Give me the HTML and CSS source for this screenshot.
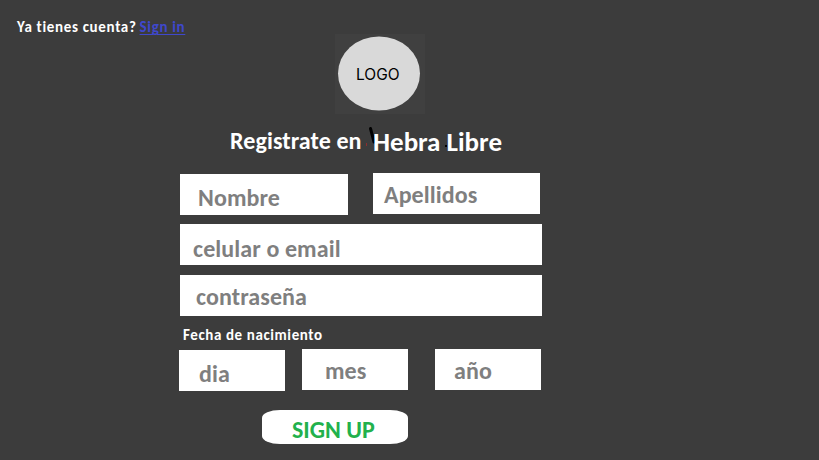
FILE: index.html
```html
<!DOCTYPE html>
<html lang="es">
<head>
<meta charset="utf-8">
<title>Hebra Libre</title>
<link rel="stylesheet" href="styles.css">
</head>
<body>
<header class="top"><span class="ask">Ya tienes cuenta?</span><a class="signin" href="#">Sign in</a></header>
<main class="page">
  <div class="logo">
    <svg width="90" height="80" viewBox="0 0 90 80"><ellipse cx="44" cy="39.5" rx="41" ry="37" fill="#d9d9d9"/></svg>
    <span class="logo-text">LOGO</span>
  </div>
  <h1 class="title">
    <span class="lead">Registrate en</span>
    <span class="brand">Hebra Libre</span>
    <svg class="strokes" width="90" height="30" viewBox="0 0 90 30"><path d="M5.5 3.5 L9 17" stroke="#000" stroke-width="3" stroke-linecap="round"/><rect x="80" y="20" width="2" height="2"/><rect x="1" y="18" width="1" height="3" fill="#8c2f2f"/></svg>
  </h1>
  <form class="form">
    <div class="row names">
      <div class="field nombre"><span>Nombre</span></div>
      <div class="field apellidos"><span>Apellidos</span></div>
    </div>
    <div class="field contact"><span>celular o email</span></div>
    <div class="field pass"><span>contraseña</span></div>
    <div class="caption"><span>Fecha de nacimiento</span></div>
    <div class="row dates">
      <div class="field dia"><span>dia</span></div>
      <div class="field mes"><span>mes</span></div>
      <div class="field anio"><span>año</span></div>
    </div>
    <button class="signup" type="button"><span>SIGN UP</span></button>
  </form>
</main>
</body>
</html>
```
FILE: styles.css
```css
* { box-sizing: border-box; }
body {
  margin: 0;
  height: 460px;
  overflow: hidden;
  background: #3c3c3c;
  font-family: Carlito, Lato, sans-serif;
  font-weight: 700;
  font-variant-ligatures: none;
  color: #fff;
  white-space: nowrap;
}
.top {
  display: flex;
  gap: 3px;
  height: 34px;
  padding: 17px 0 0 17px;
  font-size: 15px;
  line-height: 20px;
  letter-spacing: 0.67px;
}
.signin { color: #3f48cc; text-decoration: underline; text-underline-offset: 2px; text-decoration-thickness: 1px; }
.logo {
  display: grid;
  width: 90px;
  height: 80px;
  margin-left: 335px;
  background: #404040;
}
.logo svg, .logo-text { grid-area: 1 / 1; }
.logo-text {
  padding: 31px 0 0 21px;
  font: 400 15.5px/20px Inter, sans-serif;
  color: #000;
}
.title {
  position: relative;
  display: flex;
  height: 59px;
  margin: 0;
  padding: 13px 0 0 230px;
  font-weight: 700;
}
.lead { width: 143px; font-size: 24px; line-height: 28px; letter-spacing: 0.1px; }
.brand { padding-top: 1px; font-size: 27px; line-height: 28px; }
.strokes { position: absolute; left: 365px; top: 11px; z-index: -1; }
.form { width: 363px; margin-left: 179px; }
.row { display: flex; align-items: flex-start; }
.field {
  height: 41px;
  background: #fff;
  color: #7f7f7f;
  font-size: 24px;
  line-height: 34px;
  letter-spacing: 0.1px;
}
.names { height: 51px; padding-left: 1px; gap: 25px; }
.nombre { width: 168px; margin-top: 1px; padding: 7px 0 0 18px; }
.apellidos { width: 167px; padding: 5px 0 0 11px; }
.contact { margin: 0 0 10px 1px; padding: 8px 0 0 13px; }
.pass { margin-left: 1px; padding: 5px 0 0 16px; }
.caption { height: 33px; padding: 9px 0 0 4px; font-size: 15px; line-height: 20px; letter-spacing: 0.6px; }
.dia { width: 106px; margin-top: 1px; padding: 7px 0 0 20px; }
.mes { width: 106px; margin-left: 17px; padding: 5px 0 0 23px; }
.anio { width: 106px; margin-left: 27px; padding: 5px 0 0 19px; }
.signup {
  display: block;
  width: 146px;
  height: 34px;
  margin: 19px 0 0 83px;
  padding: 5px 0 0 30px;
  border: 0;
  border-radius: 18px / 8px;
  background: #fff;
  color: #22b14c;
  font: inherit;
  font-size: 24px;
  line-height: 30px;
  text-align: left;
}
```
